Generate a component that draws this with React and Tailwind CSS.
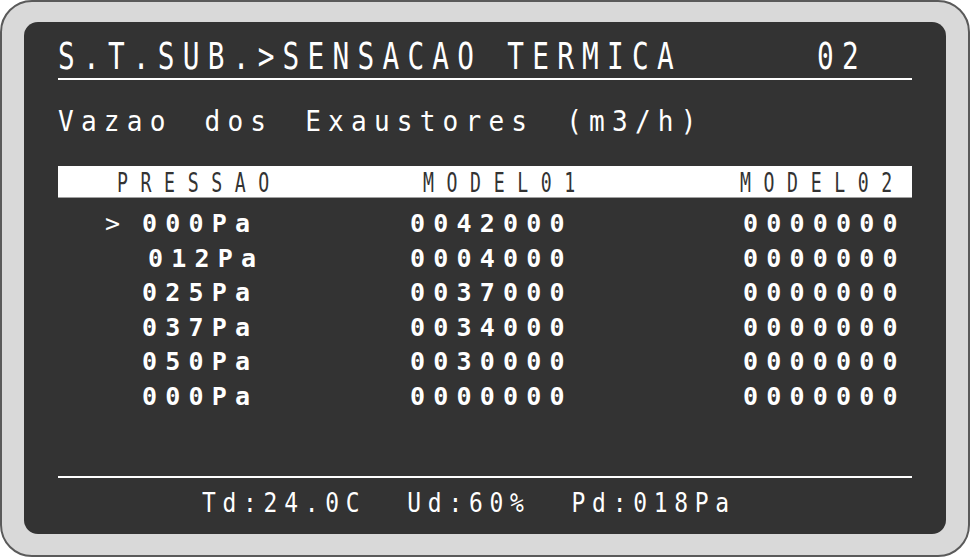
import React from 'react';

const mono = "font-['DejaVu_Sans_Mono','Liberation_Mono',monospace]";

// LCD-style text: a monospace face squeezed horizontally
const Lcd = ({ className = '', children }) => (
  <span className={`inline-block origin-left whitespace-pre ${className}`}>{children}</span>
);

const rows = [
  { marker: '>', p: '000Pa', m1: '0042000', m2: '0000000' },
  { marker: '', p: '012Pa', m1: '0004000', m2: '0000000', shift: true },
  { marker: '', p: '025Pa', m1: '0037000', m2: '0000000' },
  { marker: '', p: '037Pa', m1: '0034000', m2: '0000000' },
  { marker: '', p: '050Pa', m1: '0030000', m2: '0000000' },
  { marker: '', p: '000Pa', m1: '0000000', m2: '0000000' },
];

const App = () => {
  return (
    <div className={`w-[971px] h-[557px] bg-white ${mono}`}>
      <div className="w-[970px] h-[557px] rounded-[32px] border-2 border-[#5a5a5a] bg-[#d9d9d9] pl-[22px] pt-[20px]">
        <div className="w-[922px] h-[512px] rounded-[14px] bg-[#333333] text-white px-[34px] pt-[15px] flex flex-col">
          {/* Title */}
          <div className="flex border-b-2 border-white pb-[1px] h-[43px] overflow-visible">
            <div className="w-[759px] shrink-0 text-[37px] leading-[40px]">
              <Lcd className="scale-x-[0.75] tracking-[11px]">S.T.SUB.&gt;SENSACAO TERMICA</Lcd>
            </div>
            <div className="text-[37px] leading-[40px]">
              <Lcd className="scale-x-[0.75] tracking-[11px]">02</Lcd>
            </div>
          </div>

          {/* Subtitle */}
          <div className="mt-[25px] text-[29px] leading-[32px]">
            <Lcd className="scale-x-[0.9] tracking-[8px] [word-spacing:10px]">Vazao dos Exaustores (m3/h)</Lcd>
          </div>

          {/* Table header */}
          <div className="mt-[29px] h-[32px] bg-white border-b border-[#a0a0a0] text-[#333333] text-[26px] leading-[34px] flex overflow-hidden">
            <div className="w-[365px] pl-[59px] shrink-0">
              <Lcd className="scale-x-[0.7] tracking-[18px]">PRESSAO</Lcd>
            </div>
            <div className="w-[317px] shrink-0">
              <Lcd className="scale-x-[0.7] tracking-[18px]">MODEL01</Lcd>
            </div>
            <div>
              <Lcd className="scale-x-[0.7] tracking-[18px]">MODEL02</Lcd>
            </div>
          </div>

          {/* Rows */}
          <div className="mt-[9px] flex flex-col text-[25px] leading-[34.5px] font-bold tracking-[8.2px]">
            {rows.map((r, i) => (
              <div key={i} className="flex whitespace-pre">
                <span className="w-[84px] pl-[47px] shrink-0 font-normal">{r.marker}</span>
                <span className={`w-[268px] shrink-0 ${r.shift ? 'pl-[6px]' : ''}`}>{r.p}</span>
                <span className="w-[333px] shrink-0">{r.m1}</span>
                <span>{r.m2}</span>
              </div>
            ))}
          </div>

          {/* Footer */}
          <div className="mt-auto mb-[16px]">
            <div className="h-[2px] bg-white" />
            <div className="mt-[10px] pl-[144px] text-[27px] leading-[30px]">
              <Lcd className="scale-x-[0.85] tracking-[7.9px]">Td:24.0C  Ud:60%  Pd:018Pa</Lcd>
            </div>
          </div>
        </div>
      </div>
    </div>
  );
};

export default App;
